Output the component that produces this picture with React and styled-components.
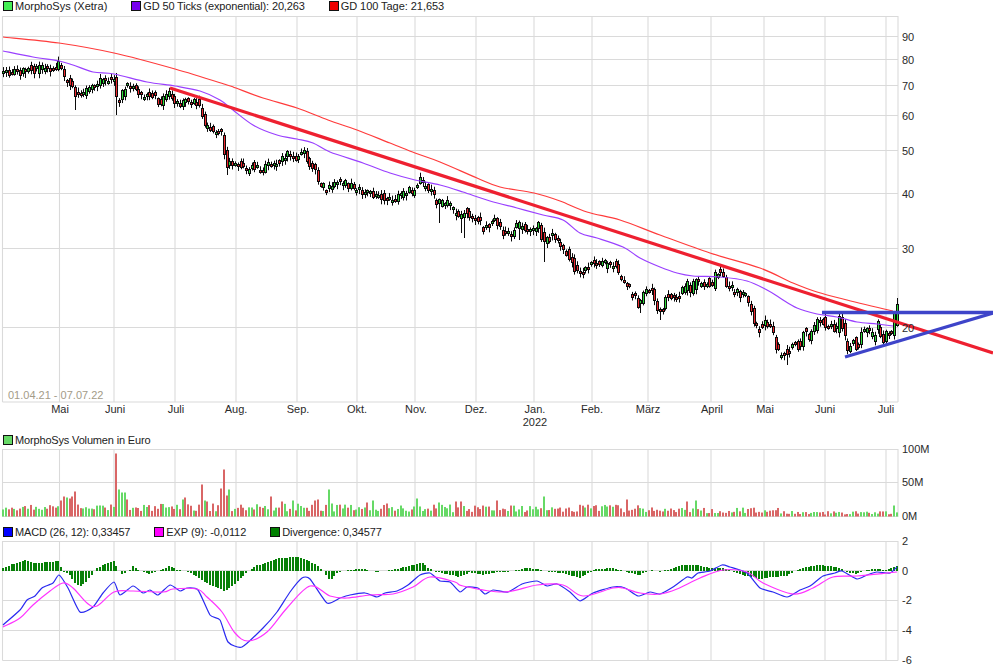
import React from "react";
import styled, { createGlobalStyle } from "styled-components";

const GlobalStyle = createGlobalStyle`
  html, body { margin: 0; padding: 0; background: #fff; }
  body { font-family: "Liberation Sans", Arial, sans-serif; }
`;

const Page = styled.div`
  width: 993px;
  height: 670px;
  display: flex;
  flex-direction: column;
  overflow: hidden;
  background: #fff;
`;
const LegendRow = styled.div`
  height: ${(p) => p.$h}px;
  box-sizing: border-box;
  padding: ${(p) => p.$top}px 0 0 3px;
  display: flex;
  align-items: flex-start;
  gap: 24px;
`;
const LegendItem = styled.div`
  display: flex;
  align-items: center;
  gap: 2px;
  height: 12px;
  font-size: 11px;
  line-height: 12px;
  color: #222;
  white-space: nowrap;
  letter-spacing: ${(p) => p.$track || 0}px;
`;
const Swatch = styled.span`
  width: 8px;
  height: 8px;
  border: 1px solid #111;
  background: ${(p) => p.$color};
  flex: none;
`;
const Chart = styled.svg`
  display: block;
  flex: none;
  width: 993px;
  height: ${(p) => p.$h}px;
  overflow: visible;
`;
const GridLine = styled.line`
  stroke: #dadada;
  stroke-width: 1.1;
`;
const AxisText = styled.text`
  font-family: "Liberation Sans", Arial, sans-serif;
  font-size: 11px;
  fill: #2a2a2a;
  text-anchor: ${(p) => p.$anchor || "start"};
  dominant-baseline: central;
`;
const RangeText = styled(AxisText)`
  fill: #a39b88;
`;
const Curve = styled.path`
  fill: none;
  stroke: ${(p) => p.$color};
  stroke-width: ${(p) => p.$w || 1.2};
  stroke-linejoin: round;
`;
const Trend = styled.line`
  stroke: ${(p) => p.$color};
  stroke-width: ${(p) => p.$w};
`;
const Wick = styled.line`
  stroke: #0a0a0a;
  stroke-width: 1;
`;
const Body = styled.rect`
  stroke: #0a0a0a;
  stroke-width: 1;
  fill: ${(p) => (p.$up ? "#2fdc3a" : "#ee2a30")};
`;
const VolumeBar = styled.rect`
  fill: ${(p) => (p.$up ? "#66d966" : "#d96666")};
`;
const DivBar = styled.rect`
  fill: #078007;
`;

const PLOT_L = 2.5, PLOT_R = 898;
const VERT = [59.5, 114, 175, 236, 297, 357, 415, 476, 534, 592, 648, 711, 764, 825, 886];
const MONTHS = [
  ["Mai", 60], ["Juni", 115], ["Juli", 176], ["Aug.", 236], ["Sep.", 298], ["Okt.", 357], ["Nov.", 416],
  ["Dez.", 476], ["Jan.", 535], ["Feb.", 592], ["März", 648], ["April", 712], ["Mai", 765], ["Juni", 825], ["Juli", 886],
];
const MAIN_TICKS = [[90, 36.5], [80, 59.5], [70, 85.5], [60, 115.5], [50, 150.5], [40, 193.5], [30, 248.5], [20, 327.5]];

const PRICE = [
  [3,71],[13,72],[20,73],[27,67],[35,71],[40,67],[48,68],[55,68],[60,62],[62,75],[65,80],[72,85],[75,95],[82,95],[85,90],[97,85],[100,80],[115,78],[117,105],[122,93],[125,86],[133,86],[137,93],[143,98],[150,92],[155,98],[160,103],[165,95],[170,89],[173,100],[180,103],[185,97],[190,103],[197,102],[202,113],[203,127],[208,125],[212,133],[217,128],[222,133],[223,150],[226,157],[227,170],[230,162],[238,163],[245,170],[250,165],[257,168],[263,172],[268,163],[277,163],[282,155],[290,153],[295,162],[302,148],[308,160],[315,168],[318,180],[325,190],[330,187],
  [337,180],[347,183],[355,188],[360,190],[367,193],[373,197],[380,195],[388,202],[397,195],[405,193],[413,190],[420,180],[425,188],[432,195],[438,202],[445,202],[452,208],[458,218],[463,210],[470,217],[477,217],[483,228],[488,223],[497,222],[502,232],[510,233],[518,225],[527,228],[533,227],[538,223],[543,243],[548,238],[552,235],[557,238],[560,248],[568,255],[577,273],[585,270],[592,257],[597,263],[607,265],[613,263],[620,275],[627,287],[632,293],[638,303],[645,290],[653,290],[655,305],[662,313],
  [665,298],[673,297],[682,290],[688,282],[690,297],[695,277],[700,285],[707,282],[712,285],[715,272],[722,275],[728,285],[733,290],[740,293],[745,292],[750,308],[753,320],[758,328],[765,323],[772,332],[778,353],[783,352],[787,356],[790,347],[795,343],[800,345],[803,332],[808,338],[815,327],[820,318],[825,322],[830,327],[837,328],[840,315],[844,337],[848,352],[853,340],[857,352],[860,335],[863,327],[868,332],[873,337],[877,323],[880,333],[883,340],[887,333],[892,332],[894,317],[897,302],
];
const GD100 = [[3,37],[59,43],[114,53],[175,69],[227,85],[236,88],[263,98],[297,108],[328,120],[357,130],[390,143],[415,153],[440,162],[477,178],[500,187],[534,193],[560,201],[587,212],[620,220],[660,235],[710,253],[760,268],[793,283],[817,292],[847,300],[893,311]];
const GD50 = [[3,51],[33,57],[59,61],[73,65],[93,72],[114,74],[147,82],[175,86],[200,91],[220,100],[233,110],[253,125],[277,135],[297,139],[313,143],[330,152],[363,163],[390,173],[415,180],[440,185],[463,192],[490,201],[517,208],[543,215],[563,220],[580,233],[597,238],[623,247],[640,258],[660,267],[677,273],[693,276],[720,277],[747,281],[767,290],[780,298],[797,308],[817,314],[837,317],[857,322],[877,324],[893,326]];
const MACD = [[3,625],[20,610],[27,600],[35,596],[42,588],[53,583],[59,575],[68,588],[80,612],[93,607],[103,593],[114,582],[120,595],[133,586],[143,593],[150,590],[158,595],[170,585],[180,591],[187,588],[198,590],[210,615],[220,620],[228,642],[242,647],[263,628],[277,612],[290,592],[302,578],[310,579],[327,603],[340,598],[350,595],[365,593],[377,597],[385,593],[397,591],[408,585],[420,575],[430,573],[440,581],[450,582],[460,592],[467,587],[478,588],[485,594],[493,590],[508,592],[522,584],[537,581],[547,586],[557,584],[570,592],[580,601],[593,593],[613,587],[625,588],[638,596],[650,592],[660,594],[673,587],[687,577],[692,578],[698,573],[710,571],[722,565],[730,567],[747,573],[760,588],[773,592],[787,597],[800,590],[810,586],[823,576],[835,573],[842,571],[857,579],[867,575],[877,572],[890,573],[897,567]];
const EXP = [[3,627],[20,618],[33,605],[50,591],[63,583],[73,588],[87,603],[97,606],[114,592],[133,591],[163,592],[173,589],[197,589],[207,597],[222,612],[235,633],[248,641],[267,632],[287,608],[310,586],[330,596],[347,598],[370,595],[393,594],[413,587],[430,577],[455,582],[463,586],[503,592],[537,585],[563,585],[583,596],[613,588],[623,588],[640,593],[660,594],[677,589],[700,578],[723,570],[747,572],[763,583],[793,594],[813,588],[833,577],[857,576],[887,573],[897,572]];
const DIVERGENCE = [[3,3],[10,6],[25,11],[35,8],[50,9],[60,10],[62,0],[68,-2],[75,-12],[80,-15],[85,-12],[92,-3],[97,3],[105,7],[114,10],[118,2],[121,-4],[130,1],[133,5],[140,0],[150,-3],[165,3],[170,5],[178,1],[190,-1],[200,-8],[210,-14],[225,-20],[235,-13],[245,-3],[255,5],[265,8],[280,13],[300,14],[315,7],[325,-2],[330,-10],[337,-2],[347,1],[363,2],[377,-1],[397,2],[417,7],[422,8],[430,2],[437,-1],[460,-6],[470,-1],[483,-4],[497,-1],[507,-1],[527,3],[537,2],[550,-1],[563,-2],[580,-7],[590,-1],[597,2],[613,3],[630,-2],[640,-4],[650,1],[660,-1],[667,1],[683,6],[697,6],[710,3],[723,3],[733,-1],[743,-4],[760,-8],[770,-6],[787,-5],[793,-1],[807,4],[820,6],[837,4],[847,-1],[857,-3],[867,1],[877,2],[887,1],[897,5]];
const LONG_LOW = { 25: 78, 75: 110, 117: 115, 226: 175, 248: 176, 438: 223, 460: 233, 545: 262, 787: 365, 463: 238, 640: 313, 660: 320, 520: 240 };
const VOLUME_PEAKS = [[60,16,0],[63,20,0],[67,19,1],[70,18,0],[72,20,0],[75,25,0],[117,63,0],[120,27,1],[123,24,1],[126,24,1],[128,17,0],[182,17,1],[185,19,0],[203,32,0],[206,16,1],[208,15,0],[222,28,0],[225,47,0],[227,21,0],[230,27,1],[272,20,0],[283,15,0],[293,16,1],[315,16,0],[318,17,0],[330,27,1],[332,13,1],[368,14,0],[373,16,1],[388,13,0],[418,18,1],[438,25,0],[440,14,1],[457,15,0],[460,15,0],[498,16,0],[543,23,0],[545,20,1],[626,17,0],[688,15,0],[695,16,1],[893,11,1]];

const interp = (pts, x) => {
  if (x <= pts[0][0]) return pts[0][1];
  for (let i = 1; i < pts.length; i++) {
    if (x <= pts[i][0]) {
      const [x0, y0] = pts[i - 1];
      const [x1, y1] = pts[i];
      return y0 + ((y1 - y0) * (x - x0)) / (x1 - x0 || 1);
    }
  }
  return pts[pts.length - 1][1];
};
const smoothPath = (pts, k = 6) => {
  let d = `M${pts[0][0]} ${pts[0][1]}`;
  for (let i = 0; i < pts.length - 1; i++) {
    const p0 = pts[i - 1] || pts[i], p1 = pts[i], p2 = pts[i + 1], p3 = pts[i + 2] || p2;
    const c1x = p1[0] + (p2[0] - p0[0]) / k, c1y = p1[1] + (p2[1] - p0[1]) / k;
    const c2x = p2[0] - (p3[0] - p1[0]) / k, c2y = p2[1] - (p3[1] - p1[1]) / k;
    d += `C${c1x.toFixed(1)} ${c1y.toFixed(1)} ${c2x.toFixed(1)} ${c2y.toFixed(1)} ${p2[0]} ${p2[1]}`;
  }
  return d;
};
const rng = (seed) => () => {
  seed = (seed + 0x6d2b79f5) | 0;
  let t = Math.imul(seed ^ (seed >>> 15), 1 | seed);
  t = (t + Math.imul(t ^ (t >>> 7), 61 | t)) ^ t;
  return ((t ^ (t >>> 14)) >>> 0) / 4294967296;
};

const COUNT = 325;
const STEP = (897 - 3.3) / (COUNT - 1);
const rand = rng(42);
const bars = [];
{
  for (let i = 0; i < COUNT; i++) {
    const cx = 3.3 + i * STEP;
    const mid = interp(PRICE, cx);
    const prevMid = interp(PRICE, cx - STEP);
    const last = i === COUNT - 1;
    const spread = cx < 300 ? 3.5 : 4.5;
    const open = last ? 325 : prevMid + (rand() - 0.5) * spread * 2;
    const close = last ? 304 : mid + (rand() - 0.5) * spread * 2;
    const px = Math.round(cx);
    const top = Math.round(Math.min(open, close)) + 0.5;
    const h = Math.max(2, Math.round(Math.abs(open - close)));
    let high = top - 1 - rand() * 4;
    let low = top + h + 1 + rand() * 4;
    Object.entries(LONG_LOW).forEach(([k, v]) => {
      if (Math.abs(cx - +k) <= STEP / 2) low = v;
    });
    if (last) high = 298;
    const up = close < open;
    let vol;
    const r = rand();
    if (cx < 117) vol = 6 + r * 6;
    else if (cx < 330) vol = 5 + r * 8;
    else if (cx < 660) vol = 4 + r * 8;
    else if (cx < 780) vol = 3 + r * 6;
    else vol = 2 + r * 3.5;
    bars.push({ i, cx, px, top, h, high, low, up, vol, volUp: up });
  }
  VOLUME_PEAKS.forEach(([x, h, u]) => {
    const b = bars[Math.round((x - 3.3) / STEP)];
    if (b) { b.vol = h; b.volUp = !!u; }
  });
}

const Grid = ({ ys, top, bottom }) => (
  <>
    {ys.map((y) => <GridLine key={y} x1={PLOT_L} x2={PLOT_R} y1={y} y2={y} />)}
    {[PLOT_L, ...VERT, PLOT_R].map((x) => <GridLine key={x} x1={x} x2={x} y1={top} y2={bottom} />)}
  </>
);

const PriceChart = () => (
  <Chart $h={416} viewBox="0 16 993 416">
    <Grid ys={[16.5, 402, ...MAIN_TICKS.map((t) => t[1])]} top={16} bottom={402} />
    {bars.map((b) => (
      <g key={b.i}>
        <Wick x1={b.px + 0.5} x2={b.px + 0.5} y1={b.high} y2={b.low} />
        <Body x={b.px - 0.5} y={b.top} width={2} height={b.h} $up={b.up} />
      </g>
    ))}
    <Curve d={smoothPath(GD100)} $color="#ff3b3b" />
    <Curve d={smoothPath(GD50)} $color="#9a40ff" />
    <Trend x1={170} y1={88} x2={993} y2={353} $color="#ee2030" $w={3.2} />
    <Trend x1={822} y1={312.5} x2={993} y2={312.5} $color="#3e44c9" $w={3.4} />
    <Trend x1={845} y1={357} x2={993} y2={313} $color="#3e44c9" $w={3.2} />
    {MAIN_TICKS.map(([label, y]) => <AxisText key={label} x={902} y={y}>{label}</AxisText>)}
    {MONTHS.map(([label, x]) => <AxisText key={label + x} x={x} y={409} $anchor="middle">{label}</AxisText>)}
    <AxisText x={535} y={422} $anchor="middle">2022</AxisText>
    <RangeText x={8} y={395}>01.04.21 - 07.07.22</RangeText>
  </Chart>
);

const VolumeChart = () => (
  <Chart $h={75} viewBox="0 449 993 75">
    <Grid ys={[449.5, 482.5, 516.5]} top={449} bottom={517} />
    {bars.map((b) => (
      <VolumeBar key={b.i} x={b.px - 1} y={516.5 - b.vol} width={2} height={b.vol} $up={b.volUp} />
    ))}
    {[["100M", 449], ["50M", 482], ["0M", 516]].map(([label, y]) => <AxisText key={label} x={902} y={y}>{label}</AxisText>)}
  </Chart>
);

const MacdChart = () => (
  <Chart $h={124} viewBox="0 541 993 124">
    <Grid ys={[541.5, 570.5, 600.5, 630.5, 660.5]} top={541} bottom={660.5} />
    {bars.map((b) => {
      const v = Math.round(interp(DIVERGENCE, b.cx));
      if (v === 0) return null;
      return <DivBar key={b.i} x={b.px - 1} y={v > 0 ? 571 - v : 571} width={2} height={Math.abs(v)} />;
    })}
    <Curve d={smoothPath(MACD, 10)} $color="#2a2af0" />
    <Curve d={smoothPath(EXP)} $color="#ff33ff" />
    {[["2", 541], ["0", 571], ["-2", 600], ["-4", 630], ["-6", 660]].map(([label, y]) => <AxisText key={label} x={902} y={y}>{label}</AxisText>)}
  </Chart>
);

const Legend = ({ items, h, top }) => (
  <LegendRow $h={h} $top={top}>
    {items.map(([color, text, track]) => (
      <LegendItem key={text} $track={track}><Swatch $color={color} />{text}</LegendItem>
    ))}
  </LegendRow>
);

export default function App() {
  return (
    <Page>
      <GlobalStyle />
      <Legend h={16} top={0} items={[["#44ee55", "MorphoSys (Xetra)"], ["#7700ee", "GD 50 Ticks (exponential): 20,263", -0.15], ["#ee0000", "GD 100 Tage: 21,653", -0.05]]} />
      <PriceChart />
      <Legend h={17} top={2} items={[["#66d966", "MorphoSys Volumen in Euro", -0.16]]} />
      <VolumeChart />
      <Legend h={17} top={2} items={[["#0000ff", "MACD (26, 12): 0,33457", -0.18], ["#ff00ff", "EXP (9): -0,0112", -0.06], ["#008000", "Divergence: 0,34577", -0.1]]} />
      <MacdChart />
    </Page>
  );
}
